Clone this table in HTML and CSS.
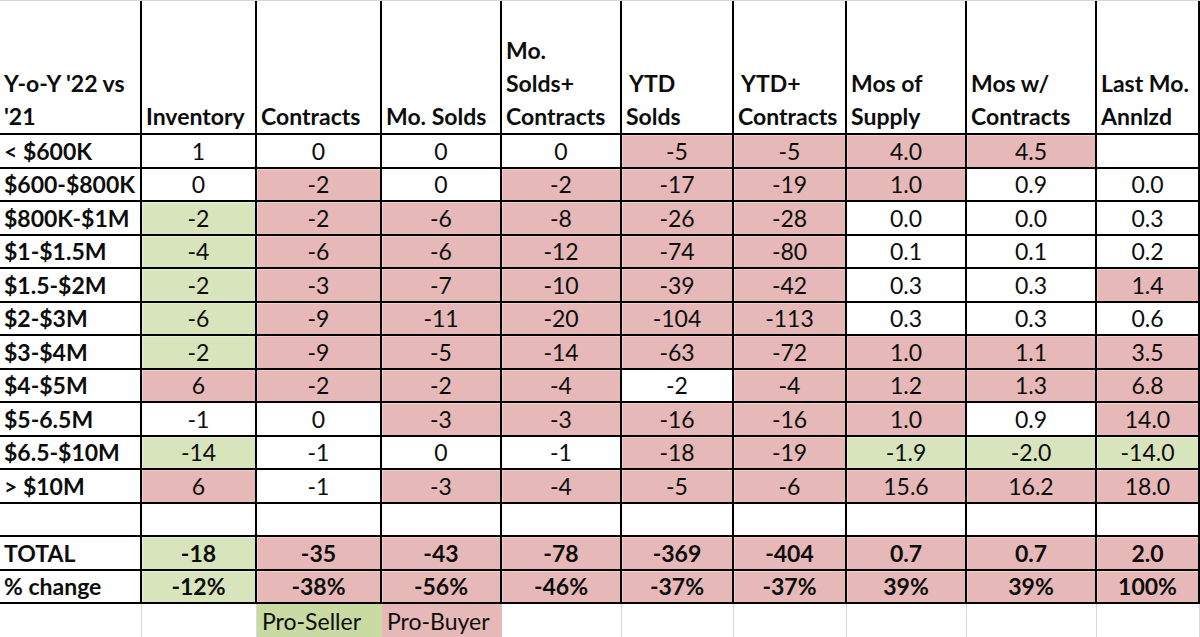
FILE: index.html
```html
<!DOCTYPE html>
<html lang="en">
<head>
<meta charset="utf-8">
<title>Y-o-Y '22 vs '21</title>
<link rel="stylesheet" href="styles.css">
</head>
<body>
<table class="sheet">
  <colgroup>
    <col class="c1"><col class="c2"><col class="c3"><col class="c4"><col class="c5">
    <col class="c6"><col class="c7"><col class="c8"><col class="c9"><col class="c10">
  </colgroup>
  <thead>
    <tr class="head">
      <th>Y-o-Y '22 vs<br>'21</th>
      <th>Inventory</th>
      <th>Contracts</th>
      <th>Mo. Solds</th>
      <th>Mo.<br>Solds+<br>Contracts</th>
      <th><span class="ind">YTD</span><br>Solds</th>
      <th><span class="ind">YTD+</span><br>Contracts</th>
      <th>Mos of<br>Supply</th>
      <th>Mos w/<br>Contracts</th>
      <th>Last Mo.<br>Annlzd</th>
    </tr>
  </thead>
  <tbody>
    <tr><th>&lt; $600K</th><td>1</td><td>0</td><td>0</td><td>0</td><td class="p">-5</td><td class="p">-5</td><td class="p">4.0</td><td class="p">4.5</td><td></td></tr>
    <tr><th>$600-$800K</th><td>0</td><td class="p">-2</td><td>0</td><td class="p">-2</td><td class="p">-17</td><td class="p">-19</td><td class="p">1.0</td><td>0.9</td><td>0.0</td></tr>
    <tr><th>$800K-$1M</th><td class="g">-2</td><td class="p">-2</td><td class="p">-6</td><td class="p">-8</td><td class="p">-26</td><td class="p">-28</td><td>0.0</td><td>0.0</td><td>0.3</td></tr>
    <tr><th>$1-$1.5M</th><td class="g">-4</td><td class="p">-6</td><td class="p">-6</td><td class="p">-12</td><td class="p">-74</td><td class="p">-80</td><td>0.1</td><td>0.1</td><td>0.2</td></tr>
    <tr><th>$1.5-$2M</th><td class="g">-2</td><td class="p">-3</td><td class="p">-7</td><td class="p">-10</td><td class="p">-39</td><td class="p">-42</td><td>0.3</td><td>0.3</td><td class="p">1.4</td></tr>
    <tr><th>$2-$3M</th><td class="g">-6</td><td class="p">-9</td><td class="p">-11</td><td class="p">-20</td><td class="p">-104</td><td class="p">-113</td><td>0.3</td><td>0.3</td><td>0.6</td></tr>
    <tr><th>$3-$4M</th><td class="g">-2</td><td class="p">-9</td><td class="p">-5</td><td class="p">-14</td><td class="p">-63</td><td class="p">-72</td><td class="p">1.0</td><td class="p">1.1</td><td class="p">3.5</td></tr>
    <tr><th>$4-$5M</th><td class="p">6</td><td class="p">-2</td><td class="p">-2</td><td class="p">-4</td><td>-2</td><td class="p">-4</td><td class="p">1.2</td><td class="p">1.3</td><td class="p">6.8</td></tr>
    <tr><th>$5-6.5M</th><td>-1</td><td>0</td><td class="p">-3</td><td class="p">-3</td><td class="p">-16</td><td class="p">-16</td><td class="p">1.0</td><td>0.9</td><td class="p">14.0</td></tr>
    <tr><th>$6.5-$10M</th><td class="g">-14</td><td>-1</td><td>0</td><td>-1</td><td class="p">-18</td><td class="p">-19</td><td class="g">-1.9</td><td class="g">-2.0</td><td class="g">-14.0</td></tr>
    <tr><th>&gt; $10M</th><td class="p">6</td><td>-1</td><td class="p">-3</td><td class="p">-4</td><td class="p">-5</td><td class="p">-6</td><td class="p">15.6</td><td class="p">16.2</td><td class="p">18.0</td></tr>
    <tr><th></th><td></td><td></td><td></td><td></td><td></td><td></td><td></td><td></td><td></td></tr>
    <tr class="bold"><th>TOTAL</th><td class="g">-18</td><td class="p">-35</td><td class="p">-43</td><td class="p">-78</td><td class="p">-369</td><td class="p">-404</td><td class="p">0.7</td><td class="p">0.7</td><td class="p">2.0</td></tr>
    <tr class="bold last"><th>% change</th><td class="g">-12%</td><td class="p">-38%</td><td class="p">-56%</td><td class="p">-46%</td><td class="p">-37%</td><td class="p">-37%</td><td class="p">39%</td><td class="p">39%</td><td class="p">100%</td></tr>
    <tr class="legend"><td></td><td></td><td class="seller">Pro-Seller</td><td class="buyer">Pro-Buyer</td><td></td><td></td><td></td><td></td><td></td><td></td></tr>
  </tbody>
</table>
</body>
</html>
```
FILE: styles.css
```css
html, body {
  margin: 0;
  padding: 0;
  background: #ffffff;
}

.sheet {
  border-collapse: separate;
  border-spacing: 0;
  table-layout: fixed;
  width: 1200px;
  font-family: Lato, "Liberation Sans", sans-serif;
  font-size: 23px;
  color: #0d0d0d;
  border-top: 1px solid #d4d4d4;
}

.c1 { width: 142px; }
.c2 { width: 115px; }
.c3 { width: 125px; }
.c4 { width: 120px; }
.c5 { width: 120px; }
.c6 { width: 112px; }
.c7 { width: 113px; }
.c8 { width: 120px; }
.c9 { width: 130px; }
.c10 { width: 103px; }

.sheet th,
.sheet td {
  padding: 0 4px;
  border-right: 2px solid #000000;
  border-bottom: 2px solid #000000;
  overflow: hidden;
  white-space: nowrap;
}

.head {
  height: 134px;
}

.head th {
  text-align: left;
  vertical-align: bottom;
  font-weight: 700;
  line-height: 33px;
  padding: 0 2px 0 4px;
}

.ind {
  padding-left: 3px;
}

tbody tr {
  height: 33.5px;
}

tbody th {
  text-align: left;
  font-weight: 700;
  padding-left: 5px;
}

tbody td {
  text-align: center;
  font-weight: 400;
}

.bold td {
  font-weight: 700;
}

.p {
  background: #e6b8b7;
  box-shadow: inset 1px 1px 0 #efcfce;
}

.g {
  background: #d8e4bc;
  box-shadow: inset 1px 1px 0 #e6eed3;
}

.legend {
  height: 34px;
}

.legend td {
  border-right: 1px solid #d9d9d9;
  border-bottom: 1px solid #d9d9d9;
  text-align: left;
  font-weight: 400;
  padding-left: 5px;
}

.legend .seller {
  background: #c9daa2;
  border-right-color: #c9daa2;
}

.legend .buyer {
  background: #e6b8b7;
  border-right-color: #e6b8b7;
}
```
